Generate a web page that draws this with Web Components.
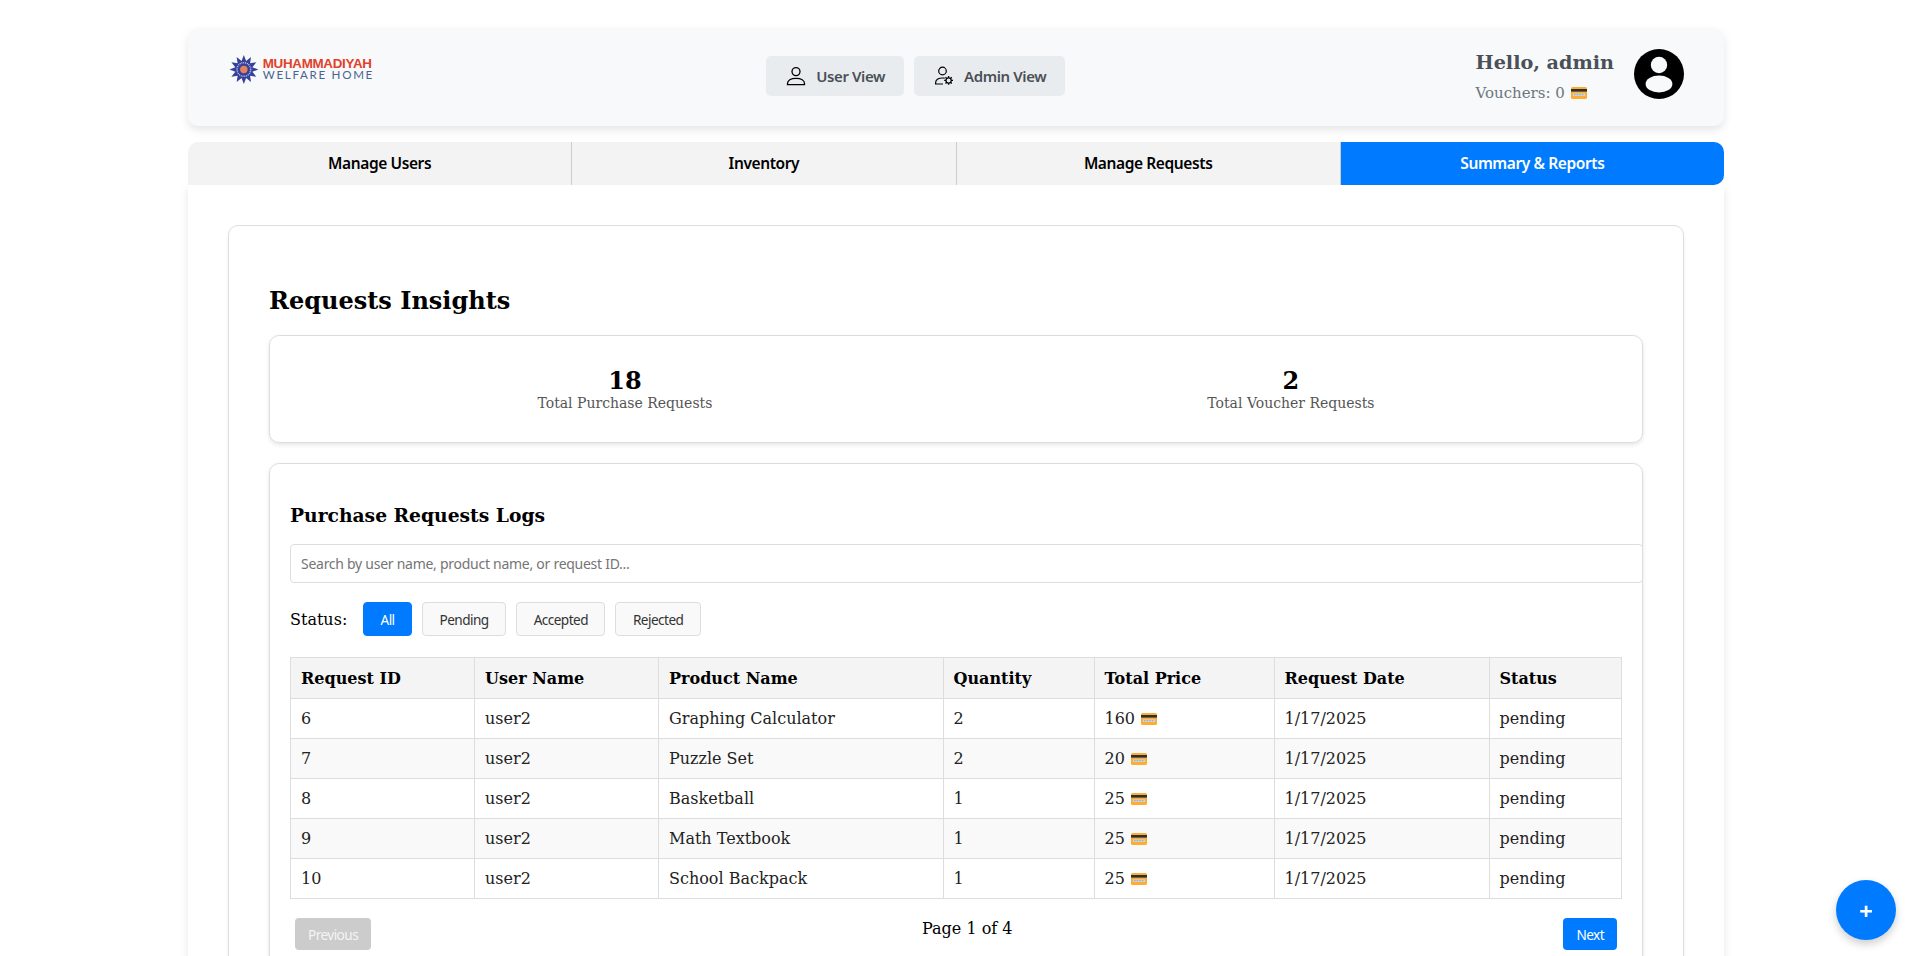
<!DOCTYPE html>
<html>
<head>
<meta charset="utf-8">
<title>Requests Insights</title>
<style>
    html, body { margin: 0; padding: 0; background: #fff; }
    body { font-family: "DejaVu Serif", serif; color: #000; }
    .page { width: 1536px; margin: 0 0 0 188px; padding-top: 28px; }
</style>
</head>
<body>
<div class="page">
    <site-header></site-header>
    <tab-bar></tab-bar>
    <report-panel>
        <stat-summary></stat-summary>
        <request-logs></request-logs>
    </report-panel>
</div>
<fab-button></fab-button>

<script>
const SANS = `"Noto Sans", "Open Sans", sans-serif`;

class CreditIcon extends HTMLElement {
    constructor() {
        super();
        this.attachShadow({ mode: "open" });
        this.shadowRoot.innerHTML = `
            <style>
                :host { display: inline-block; width: 16px; height: 12px; margin-left: 1px; vertical-align: -1px; }
                svg { display: block; }
            </style>
            <svg width="16" height="12" viewBox="0 0 16 12">
                <rect x="0" y="0" width="16" height="12" rx="1.6" fill="#ffac33"/>
                <rect x="0" y="2" width="16" height="2.6" fill="#292f33"/>
                <rect x="2" y="6.4" width="12" height="2.6" fill="#ccd6dd"/>
                <path d="M3 7.7h1.6M5.6 7.7h1.6M8.2 7.7h1.6M10.8 7.7h1.6" stroke="#8899a6" stroke-width=".8"/>
            </svg>`;
    }
}
customElements.define("credit-icon", CreditIcon);

class ViewButton extends HTMLElement {
    constructor() {
        super();
        this.attachShadow({ mode: "open" });
        this.shadowRoot.innerHTML = `
            <style>
                :host {
                    display: inline-flex;
                    align-items: center;
                    gap: 10px;
                    height: 40px;
                    padding: 0 19px 1px 20px;
                    box-sizing: border-box;
                    background: #e9ecef;
                    border-radius: 5px;
                    color: #495057;
                    font: 600 15px ${SANS};
                    letter-spacing: -0.4px;
                }
            </style>
            <slot name="icon"></slot><slot></slot>`;
    }
}
customElements.define("view-button", ViewButton);

function sunPath() {
    // twelve point sun of the logo
    let d = "";
    for (let i = 0; i < 24; i++) {
        const r = i % 2 === 0 ? 15.5 : 9.5;
        const a = (i / 24) * Math.PI * 2 - Math.PI / 2;
        d += (i ? "L" : "M") + (r * Math.cos(a)).toFixed(2) + " " + (r * Math.sin(a)).toFixed(2);
    }
    return d + "Z";
}

class SiteHeader extends HTMLElement {
    constructor() {
        super();
        this.attachShadow({ mode: "open" });
        this.shadowRoot.innerHTML = `
            <style>
                :host {
                    display: flex;
                    justify-content: space-between;
                    height: 98px;
                    box-sizing: border-box;
                    padding: 0 40px;
                    background: #f8f9fa;
                    border-radius: 10px;
                    box-shadow: 0 4px 8px rgba(0, 0, 0, 0.1);
                }
                .logo { display: flex; align-items: center; gap: 4px; width: 145px; height: 30px; margin: 26px 0 0 1px; }
                .logo-text { display: flex; flex-direction: column; }
                .logo-top { font: 700 13.4px/11px "Liberation Sans", sans-serif; color: #e2412a; letter-spacing: -0.3px; white-space: nowrap; }
                .logo-bottom { font: 400 11.6px/11px Lato, sans-serif; color: #4a6390; letter-spacing: 1.7px; white-space: nowrap; }
                .views { display: flex; gap: 10px; align-items: flex-start; margin: 28px 0 0 -18px; }
                .user { display: flex; align-items: flex-start; gap: 20px; }
                .hello { font-size: 19.2px; font-weight: 700; color: #495057; line-height: 24px; margin: 23px 0 8px; }
                .vouchers { font-size: 15px; color: #6c757d; line-height: 20px; }
                .avatar { display: block; margin-top: 21px; }
            </style>
            <div class="logo">
                <svg width="31" height="31" viewBox="-16 -16 32 32">
                    <path fill="#34409a" d="${sunPath()}"/>
                    <circle r="8.2" fill="#34409a"/>
                    <circle r="7.4" fill="none" stroke="#c8cce6" stroke-width="1.6" stroke-dasharray="1 1"/>
                    <circle r="4" fill="#e8805c"/>
                </svg>
                <div class="logo-text">
                    <span class="logo-top">MUHAMMADIYAH</span>
                    <span class="logo-bottom">WELFARE HOME</span>
                </div>
            </div>
            <div class="views">
                <view-button>
                    <svg slot="icon" width="20" height="20" viewBox="0 0 20 20" fill="none" stroke="#000" stroke-width="1.3">
                        <circle cx="10" cy="5.6" r="4"/>
                        <path d="M1.5 18.6v-1c0-3.4 3.2-5.2 8.5-5.2s8.5 1.8 8.5 5.2v1z"/>
                    </svg>
                    User View
                </view-button>
                <view-button>
                    <svg slot="icon" width="20" height="20" viewBox="0 0 20 20" fill="none" stroke="#000" stroke-width="1.2">
                        <circle cx="8.5" cy="5" r="3.8"/>
                        <path d="M9 18H1.6v-1c0-3.2 2.6-5 6.9-5 .8 0 1.5 .1 2.2 .2"/>
                        <circle cx="14.6" cy="14.4" r="2.6"/>
                        <path d="M14.6 10v1.8M14.6 17v1.8M10.2 14.4H12M17.2 14.4H19M11.5 11.3l1.3 1.3M16.4 16.2l1.3 1.3M11.5 17.5l1.3-1.3M16.4 12.6l1.3-1.3" stroke-width="1.3"/>
                    </svg>
                    Admin View
                </view-button>
            </div>
            <div class="user">
                <div>
                    <div class="hello">Hello, admin</div>
                    <div class="vouchers">Vouchers: 0 <credit-icon></credit-icon></div>
                </div>
                <svg class="avatar" width="50" height="50" viewBox="0 0 50 50">
                    <circle cx="25" cy="25" r="25" fill="#000"/>
                    <circle cx="25" cy="16" r="8.2" fill="#f8f9fa"/>
                    <ellipse cx="25" cy="35" rx="13.4" ry="8.4" fill="#f8f9fa"/>
                </svg>
            </div>`;
    }
}
customElements.define("site-header", SiteHeader);

class TabBar extends HTMLElement {
    constructor() {
        super();
        this.attachShadow({ mode: "open" });
        const tabs = ["Manage Users", "Inventory", "Manage Requests", "Summary & Reports"];
        this.shadowRoot.innerHTML = `
            <style>
                :host {
                    display: flex;
                    margin-top: 16px;
                    height: 43px;
                    border-radius: 10px 10px 0 0;
                    font: 600 15.5px ${SANS};
                    letter-spacing: -0.4px;
                }
                .tab {
                    flex: 1;
                    display: flex;
                    align-items: center;
                    justify-content: center;
                    padding-bottom: 1px;
                    box-sizing: border-box;
                    background: #f3f3f3;
                    color: #000;
                    border-right: 1px solid #ccc;
                }
                .tab:first-of-type { border-radius: 10px 0 0 0; }
                .tab:last-of-type { border-right: none; border-radius: 0 10px 10px 0; }
                .tab.active { background: #007bff; color: #fff; }
            </style>
            ${tabs.map((t, i) => `<div class="tab${i === 3 ? " active" : ""}">${t.replace("&", "&amp;")}</div>`).join("")}`;
    }
}
customElements.define("tab-bar", TabBar);

class ReportPanel extends HTMLElement {
    constructor() {
        super();
        this.attachShadow({ mode: "open" });
        this.shadowRoot.innerHTML = `
            <style>
                :host {
                    display: block;
                    padding: 40px;
                    background: #fff;
                    border-radius: 0 0 10px 10px;
                    box-shadow: 0 4px 8px rgba(0, 0, 0, 0.1);
                }
                .inner {
                    border: 1px solid #ddd;
                    border-radius: 10px;
                    padding: 40px;
                    box-shadow: 0 2px 4px rgba(0, 0, 0, 0.05);
                }
                h2 { margin: 18px 0 18px; font-size: 24px; line-height: 33px; font-weight: 700; }
            </style>
            <div class="inner">
                <h2>Requests Insights</h2>
                <slot></slot>
            </div>`;
    }
}
customElements.define("report-panel", ReportPanel);

class StatSummary extends HTMLElement {
    constructor() {
        super();
        this.attachShadow({ mode: "open" });
        this.shadowRoot.innerHTML = `
            <style>
                :host {
                    display: flex;
                    justify-content: space-around;
                    padding: 31px 20px 31px;
                    border: 1px solid #ddd;
                    border-radius: 10px;
                    box-shadow: 0 2px 4px rgba(0, 0, 0, 0.1);
                    text-align: center;
                }
                .num { font-size: 24px; font-weight: 700; line-height: 28px; }
                .label { font-size: 14px; line-height: 16px; color: #555; }
            </style>
            <div><div class="num">18</div><div class="label">Total Purchase Requests</div></div>
            <div><div class="num">2</div><div class="label">Total Voucher Requests</div></div>`;
    }
}
customElements.define("stat-summary", StatSummary);

class RequestLogs extends HTMLElement {
    constructor() {
        super();
        this.attachShadow({ mode: "open" });
        const rows = [
            [6, "user2", "Graphing Calculator", 2, 160],
            [7, "user2", "Puzzle Set", 2, 20],
            [8, "user2", "Basketball", 1, 25],
            [9, "user2", "Math Textbook", 1, 25],
            [10, "user2", "School Backpack", 1, 25],
        ];
        const body = rows.map(r => `
            <tr>
                <td>${r[0]}</td><td>${r[1]}</td><td>${r[2]}</td><td>${r[3]}</td>
                <td>${r[4]} <credit-icon></credit-icon></td>
                <td>1/17/2025</td><td>pending</td>
            </tr>`).join("");
        this.shadowRoot.innerHTML = `
            <style>
                :host {
                    display: block;
                    margin-top: 20px;
                    padding: 20px;
                    border: 1px solid #ddd;
                    border-radius: 10px;
                    box-shadow: 0 2px 4px rgba(0, 0, 0, 0.1);
                }
                h3 { margin: 19px 0 17px; font-size: 18.72px; line-height: 24px; font-weight: 700; }
                input {
                    display: block;
                    box-sizing: border-box;
                    width: calc(100% + 21px);
                    height: 39px;
                    padding: 0 10px;
                    border: 1px solid #ddd;
                    border-radius: 4px;
                    font: 14px ${SANS};
                    letter-spacing: -0.27px;
                    background: #fff;
                }
                input::placeholder { color: #757575; opacity: 1; }
                .filters { display: flex; align-items: center; gap: 10px; margin-top: 19px; }
                .filters span { font-size: 16px; margin-right: 5px; width: 58px; }
                button {
                    height: 34px;
                    padding: 0 16.5px;
                    border: 1px solid #ddd;
                    border-radius: 4px;
                    background: #f9f9f9;
                    color: #333;
                    font: 13.6px ${SANS};
                    letter-spacing: -0.55px;
                }
                button.on { background: #007bff; border-color: #007bff; color: #fff; }
                table {
                    width: 100%;
                    margin-top: 21px;
                    border-collapse: collapse;
                    table-layout: fixed;
                    font-size: 16px;
                }
                th, td { border: 1px solid #ddd; padding: 0 10px; height: 39px; text-align: left; }
                td { color: #222; }
                th { background: #f4f4f4; height: 40px; font-weight: 700; }
                tbody tr:nth-child(even) { background: #f9f9f9; }
                .pager { display: flex; justify-content: space-between; align-items: flex-start; margin-top: 19px; padding: 0 5px; font-size: 16px; line-height: 19px; }
                .pager span { margin-top: 1px; }
                .pager button { height: 32px; background: #007bff; border: none; color: #fff; padding: 0 13px; }
                .pager button:disabled { background: #ccc; color: #f4f4f4; }
            </style>
            <h3>Purchase Requests Logs</h3>
            <input type="text" placeholder="Search by user name, product name, or request ID...">
            <div class="filters">
                <span>Status:</span>
                <button class="on">All</button>
                <button>Pending</button>
                <button>Accepted</button>
                <button>Rejected</button>
            </div>
            <table>
                <colgroup>
                    <col style="width:184px"><col style="width:184px"><col style="width:284.5px">
                    <col style="width:151px"><col style="width:180px"><col style="width:215px"><col>
                </colgroup>
                <thead>
                    <tr><th>Request ID</th><th>User Name</th><th>Product Name</th><th>Quantity</th><th>Total Price</th><th>Request Date</th><th>Status</th></tr>
                </thead>
                <tbody>${body}</tbody>
            </table>
            <div class="pager">
                <button disabled>Previous</button>
                <span>Page 1 of 4</span>
                <button>Next</button>
            </div>`;
    }
}
customElements.define("request-logs", RequestLogs);

class FabButton extends HTMLElement {
    constructor() {
        super();
        this.attachShadow({ mode: "open" });
        this.shadowRoot.innerHTML = `
            <style>
                :host {
                    position: fixed;
                    right: 11px;
                    bottom: 16px;
                    width: 60px;
                    height: 60px;
                    display: flex;
                    align-items: center;
                    justify-content: center;
                    border-radius: 50%;
                    background: #007bff;
                    color: #fff;
                    box-shadow: 0 4px 8px rgba(0, 0, 0, 0.2);
                    font: 700 24px ${SANS};
                }
            </style>
            +`;
    }
}
customElements.define("fab-button", FabButton);
</script>
</body>
</html>
